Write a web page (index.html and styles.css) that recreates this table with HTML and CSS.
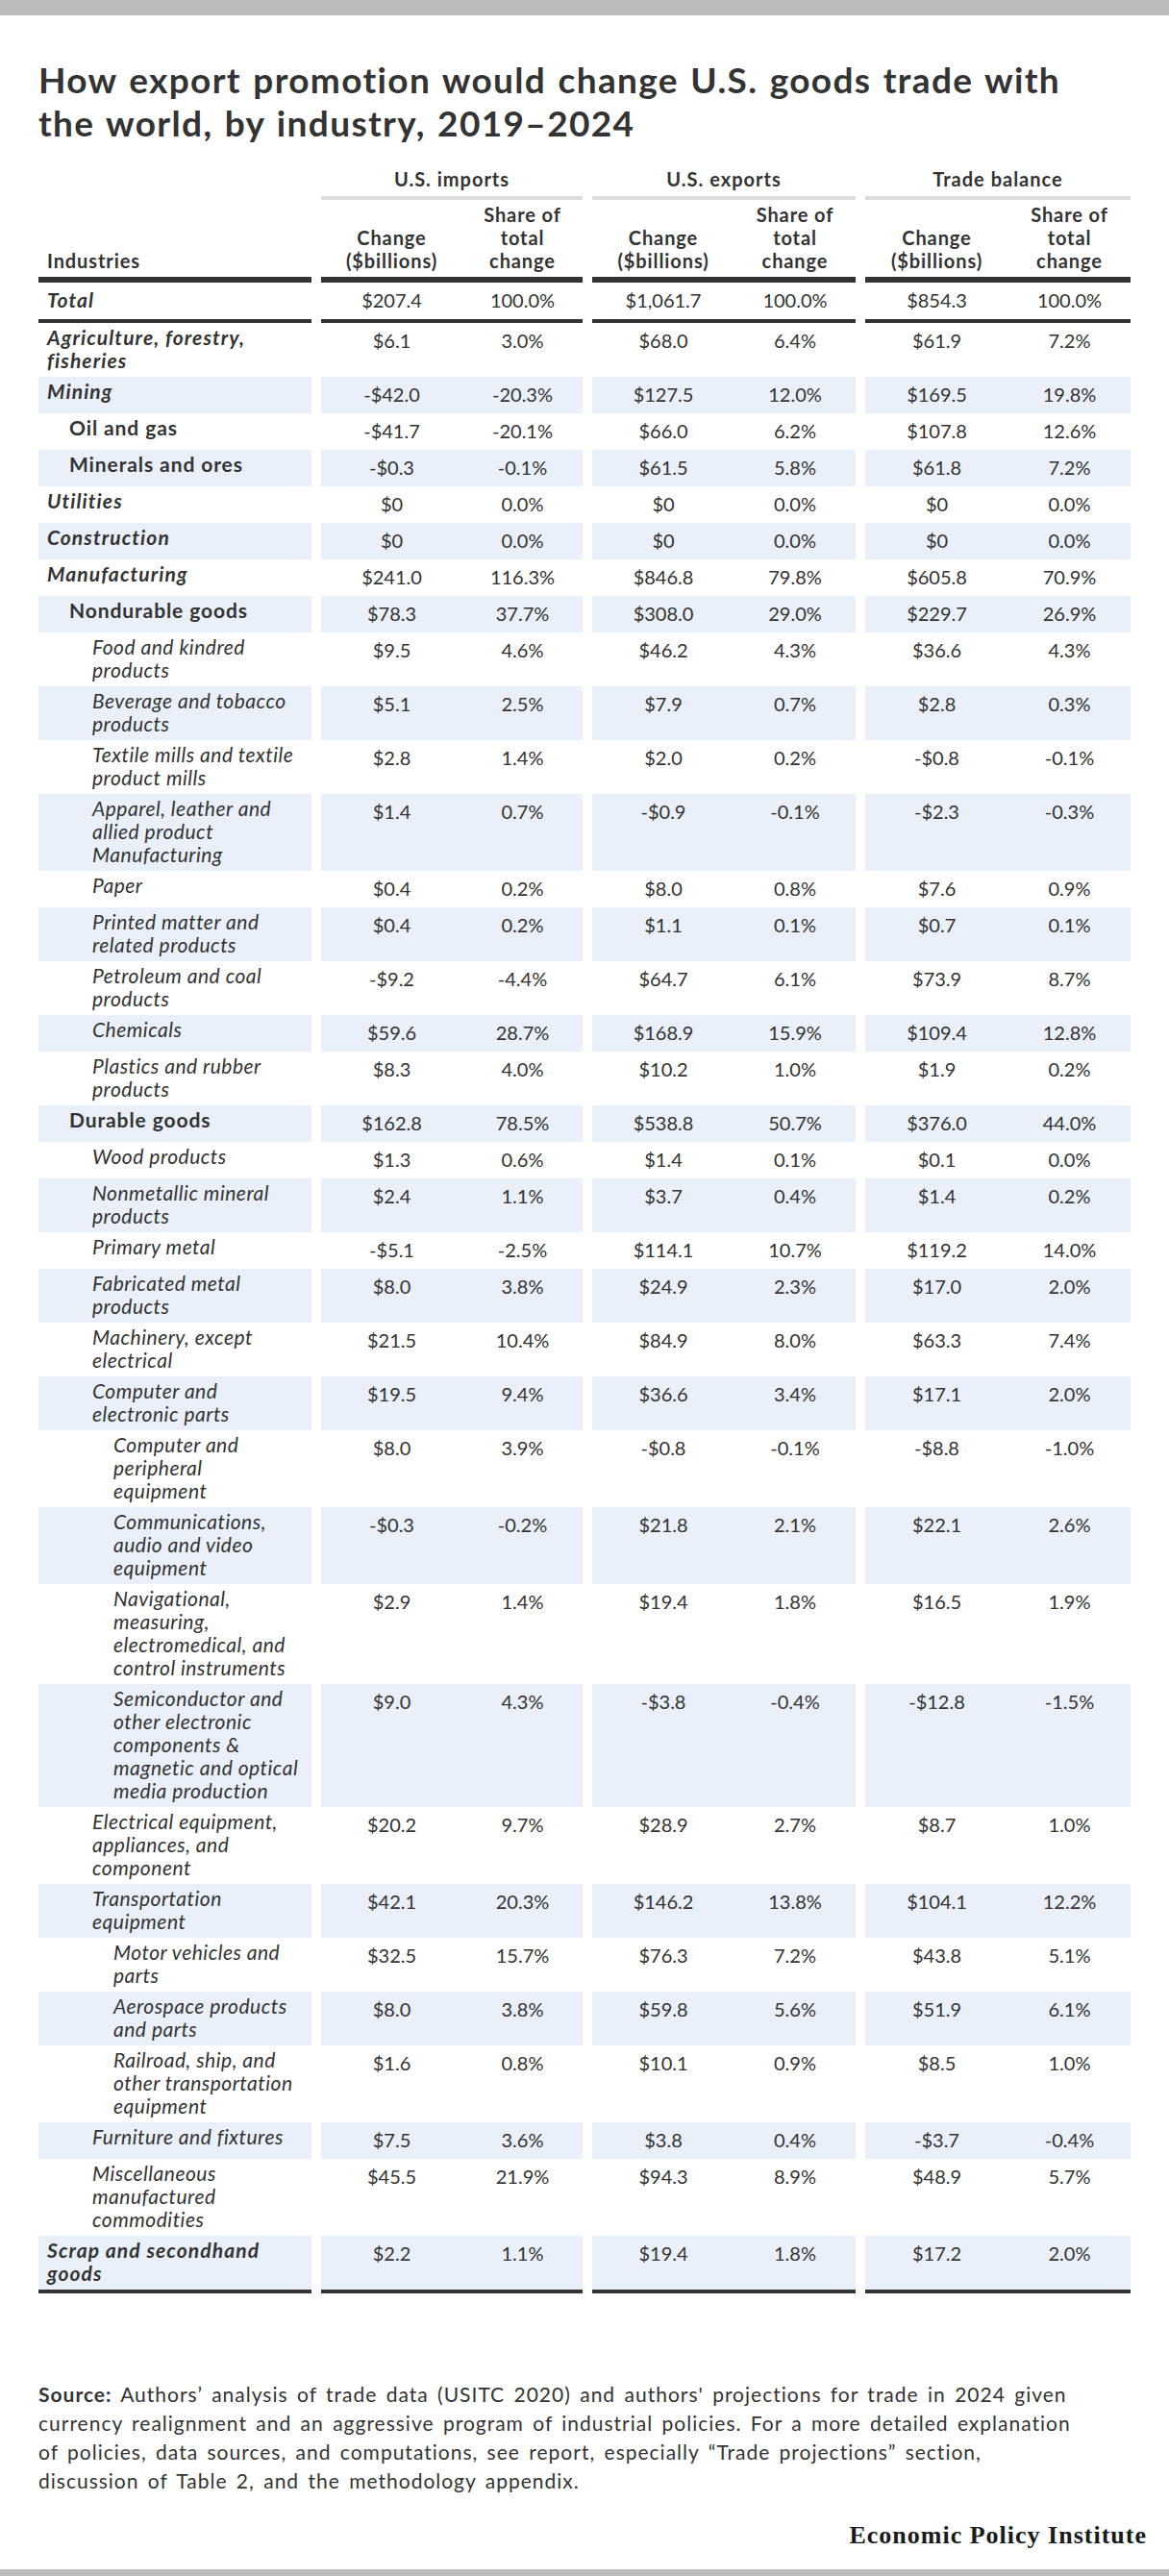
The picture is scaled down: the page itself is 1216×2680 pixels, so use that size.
FILE: index.html
```html
<!DOCTYPE html>
<html lang="en">
<head>
<meta charset="utf-8">
<title>How export promotion would change U.S. goods trade</title>
<link rel="stylesheet" href="styles.css">
</head>
<body>
<div class="topbar"></div>
<main class="wrap">
  <h1 class="title">How export promotion would change U.S. goods trade with<br>the world, by industry, 2019–2024</h1>

  <div class="table">
    <div class="row hd1">
      <div class="gh empty"></div>
      <div class="gh">U.S. imports</div>
      <div class="gh">U.S. exports</div>
      <div class="gh">Trade balance</div>
    </div>
    <div class="row hd2">
      <div class="c lab">Industries</div>
      <div class="c g"><span>Change<br>($billions)</span><span>Share of<br>total<br>change</span></div>
      <div class="c g"><span>Change<br>($billions)</span><span>Share of<br>total<br>change</span></div>
      <div class="c g"><span>Change<br>($billions)</span><span>Share of<br>total<br>change</span></div>
    </div>
    <div class="row total l0">
      <div class="c lab">Total</div>
      <div class="c g"><span>$207.4</span><span>100.0%</span></div>
      <div class="c g"><span>$1,061.7</span><span>100.0%</span></div>
      <div class="c g"><span>$854.3</span><span>100.0%</span></div>
    </div>

    <div class="tbody">
      <div class="row l0"><div class="c lab">Agriculture, forestry,<br>fisheries</div><div class="c g"><span>$6.1</span><span>3.0%</span></div><div class="c g"><span>$68.0</span><span>6.4%</span></div><div class="c g"><span>$61.9</span><span>7.2%</span></div></div>
      <div class="row l0"><div class="c lab">Mining</div><div class="c g"><span>-$42.0</span><span>-20.3%</span></div><div class="c g"><span>$127.5</span><span>12.0%</span></div><div class="c g"><span>$169.5</span><span>19.8%</span></div></div>
      <div class="row l1"><div class="c lab">Oil and gas</div><div class="c g"><span>-$41.7</span><span>-20.1%</span></div><div class="c g"><span>$66.0</span><span>6.2%</span></div><div class="c g"><span>$107.8</span><span>12.6%</span></div></div>
      <div class="row l1"><div class="c lab">Minerals and ores</div><div class="c g"><span>-$0.3</span><span>-0.1%</span></div><div class="c g"><span>$61.5</span><span>5.8%</span></div><div class="c g"><span>$61.8</span><span>7.2%</span></div></div>
      <div class="row l0"><div class="c lab">Utilities</div><div class="c g"><span>$0</span><span>0.0%</span></div><div class="c g"><span>$0</span><span>0.0%</span></div><div class="c g"><span>$0</span><span>0.0%</span></div></div>
      <div class="row l0"><div class="c lab">Construction</div><div class="c g"><span>$0</span><span>0.0%</span></div><div class="c g"><span>$0</span><span>0.0%</span></div><div class="c g"><span>$0</span><span>0.0%</span></div></div>
      <div class="row l0"><div class="c lab">Manufacturing</div><div class="c g"><span>$241.0</span><span>116.3%</span></div><div class="c g"><span>$846.8</span><span>79.8%</span></div><div class="c g"><span>$605.8</span><span>70.9%</span></div></div>
      <div class="row l1"><div class="c lab">Nondurable goods</div><div class="c g"><span>$78.3</span><span>37.7%</span></div><div class="c g"><span>$308.0</span><span>29.0%</span></div><div class="c g"><span>$229.7</span><span>26.9%</span></div></div>
      <div class="row l2"><div class="c lab">Food and kindred<br>products</div><div class="c g"><span>$9.5</span><span>4.6%</span></div><div class="c g"><span>$46.2</span><span>4.3%</span></div><div class="c g"><span>$36.6</span><span>4.3%</span></div></div>
      <div class="row l2"><div class="c lab">Beverage and tobacco<br>products</div><div class="c g"><span>$5.1</span><span>2.5%</span></div><div class="c g"><span>$7.9</span><span>0.7%</span></div><div class="c g"><span>$2.8</span><span>0.3%</span></div></div>
      <div class="row l2"><div class="c lab">Textile mills and textile<br>product mills</div><div class="c g"><span>$2.8</span><span>1.4%</span></div><div class="c g"><span>$2.0</span><span>0.2%</span></div><div class="c g"><span>-$0.8</span><span>-0.1%</span></div></div>
      <div class="row l2"><div class="c lab">Apparel, leather and<br>allied product<br>Manufacturing</div><div class="c g"><span>$1.4</span><span>0.7%</span></div><div class="c g"><span>-$0.9</span><span>-0.1%</span></div><div class="c g"><span>-$2.3</span><span>-0.3%</span></div></div>
      <div class="row l2"><div class="c lab">Paper</div><div class="c g"><span>$0.4</span><span>0.2%</span></div><div class="c g"><span>$8.0</span><span>0.8%</span></div><div class="c g"><span>$7.6</span><span>0.9%</span></div></div>
      <div class="row l2"><div class="c lab">Printed matter and<br>related products</div><div class="c g"><span>$0.4</span><span>0.2%</span></div><div class="c g"><span>$1.1</span><span>0.1%</span></div><div class="c g"><span>$0.7</span><span>0.1%</span></div></div>
      <div class="row l2"><div class="c lab">Petroleum and coal<br>products</div><div class="c g"><span>-$9.2</span><span>-4.4%</span></div><div class="c g"><span>$64.7</span><span>6.1%</span></div><div class="c g"><span>$73.9</span><span>8.7%</span></div></div>
      <div class="row l2"><div class="c lab">Chemicals</div><div class="c g"><span>$59.6</span><span>28.7%</span></div><div class="c g"><span>$168.9</span><span>15.9%</span></div><div class="c g"><span>$109.4</span><span>12.8%</span></div></div>
      <div class="row l2"><div class="c lab">Plastics and rubber<br>products</div><div class="c g"><span>$8.3</span><span>4.0%</span></div><div class="c g"><span>$10.2</span><span>1.0%</span></div><div class="c g"><span>$1.9</span><span>0.2%</span></div></div>
      <div class="row l1"><div class="c lab">Durable goods</div><div class="c g"><span>$162.8</span><span>78.5%</span></div><div class="c g"><span>$538.8</span><span>50.7%</span></div><div class="c g"><span>$376.0</span><span>44.0%</span></div></div>
      <div class="row l2"><div class="c lab">Wood products</div><div class="c g"><span>$1.3</span><span>0.6%</span></div><div class="c g"><span>$1.4</span><span>0.1%</span></div><div class="c g"><span>$0.1</span><span>0.0%</span></div></div>
      <div class="row l2"><div class="c lab">Nonmetallic mineral<br>products</div><div class="c g"><span>$2.4</span><span>1.1%</span></div><div class="c g"><span>$3.7</span><span>0.4%</span></div><div class="c g"><span>$1.4</span><span>0.2%</span></div></div>
      <div class="row l2"><div class="c lab">Primary metal</div><div class="c g"><span>-$5.1</span><span>-2.5%</span></div><div class="c g"><span>$114.1</span><span>10.7%</span></div><div class="c g"><span>$119.2</span><span>14.0%</span></div></div>
      <div class="row l2"><div class="c lab">Fabricated metal<br>products</div><div class="c g"><span>$8.0</span><span>3.8%</span></div><div class="c g"><span>$24.9</span><span>2.3%</span></div><div class="c g"><span>$17.0</span><span>2.0%</span></div></div>
      <div class="row l2"><div class="c lab">Machinery, except<br>electrical</div><div class="c g"><span>$21.5</span><span>10.4%</span></div><div class="c g"><span>$84.9</span><span>8.0%</span></div><div class="c g"><span>$63.3</span><span>7.4%</span></div></div>
      <div class="row l2"><div class="c lab">Computer and<br>electronic parts</div><div class="c g"><span>$19.5</span><span>9.4%</span></div><div class="c g"><span>$36.6</span><span>3.4%</span></div><div class="c g"><span>$17.1</span><span>2.0%</span></div></div>
      <div class="row l3"><div class="c lab">Computer and<br>peripheral<br>equipment</div><div class="c g"><span>$8.0</span><span>3.9%</span></div><div class="c g"><span>-$0.8</span><span>-0.1%</span></div><div class="c g"><span>-$8.8</span><span>-1.0%</span></div></div>
      <div class="row l3"><div class="c lab">Communications,<br>audio and video<br>equipment</div><div class="c g"><span>-$0.3</span><span>-0.2%</span></div><div class="c g"><span>$21.8</span><span>2.1%</span></div><div class="c g"><span>$22.1</span><span>2.6%</span></div></div>
      <div class="row l3"><div class="c lab">Navigational,<br>measuring,<br>electromedical, and<br>control instruments</div><div class="c g"><span>$2.9</span><span>1.4%</span></div><div class="c g"><span>$19.4</span><span>1.8%</span></div><div class="c g"><span>$16.5</span><span>1.9%</span></div></div>
      <div class="row l3"><div class="c lab">Semiconductor and<br>other electronic<br>components &amp;<br>magnetic and optical<br>media production</div><div class="c g"><span>$9.0</span><span>4.3%</span></div><div class="c g"><span>-$3.8</span><span>-0.4%</span></div><div class="c g"><span>-$12.8</span><span>-1.5%</span></div></div>
      <div class="row l2"><div class="c lab">Electrical equipment,<br>appliances, and<br>component</div><div class="c g"><span>$20.2</span><span>9.7%</span></div><div class="c g"><span>$28.9</span><span>2.7%</span></div><div class="c g"><span>$8.7</span><span>1.0%</span></div></div>
      <div class="row l2"><div class="c lab">Transportation<br>equipment</div><div class="c g"><span>$42.1</span><span>20.3%</span></div><div class="c g"><span>$146.2</span><span>13.8%</span></div><div class="c g"><span>$104.1</span><span>12.2%</span></div></div>
      <div class="row l3"><div class="c lab">Motor vehicles and<br>parts</div><div class="c g"><span>$32.5</span><span>15.7%</span></div><div class="c g"><span>$76.3</span><span>7.2%</span></div><div class="c g"><span>$43.8</span><span>5.1%</span></div></div>
      <div class="row l3"><div class="c lab">Aerospace products<br>and parts</div><div class="c g"><span>$8.0</span><span>3.8%</span></div><div class="c g"><span>$59.8</span><span>5.6%</span></div><div class="c g"><span>$51.9</span><span>6.1%</span></div></div>
      <div class="row l3"><div class="c lab">Railroad, ship, and<br>other transportation<br>equipment</div><div class="c g"><span>$1.6</span><span>0.8%</span></div><div class="c g"><span>$10.1</span><span>0.9%</span></div><div class="c g"><span>$8.5</span><span>1.0%</span></div></div>
      <div class="row l2"><div class="c lab">Furniture and fixtures</div><div class="c g"><span>$7.5</span><span>3.6%</span></div><div class="c g"><span>$3.8</span><span>0.4%</span></div><div class="c g"><span>-$3.7</span><span>-0.4%</span></div></div>
      <div class="row l2"><div class="c lab">Miscellaneous<br>manufactured<br>commodities</div><div class="c g"><span>$45.5</span><span>21.9%</span></div><div class="c g"><span>$94.3</span><span>8.9%</span></div><div class="c g"><span>$48.9</span><span>5.7%</span></div></div>
      <div class="row l0 last"><div class="c lab">Scrap and secondhand<br>goods</div><div class="c g"><span>$2.2</span><span>1.1%</span></div><div class="c g"><span>$19.4</span><span>1.8%</span></div><div class="c g"><span>$17.2</span><span>2.0%</span></div></div>
    </div>
  </div>

  <p class="source"><strong>Source:</strong> Authors’ analysis of trade data (USITC 2020) and authors' projections for trade in 2024 given<br>currency realignment and an aggressive program of industrial policies. For a more detailed explanation<br>of policies, data sources, and computations, see report, especially “Trade projections” section,<br>discussion of Table 2, and the methodology appendix.</p>

  <div class="logo">Economic Policy Institute</div>
</main>
<div class="bottombar"></div>
</body>
</html>
```

FILE: styles.css
```css
html, body {
  margin: 0;
  padding: 0;
  background: #ffffff;
}

body {
  width: 1216px;
  height: 2680px;
  display: flex;
  flex-direction: column;
  font-family: "Lato", "Noto Sans", sans-serif;
  color: #333333;
}

.topbar {
  height: 16px;
  background: #bbbbbb;
  flex: none;
}

.bottombar {
  height: 7px;
  background: #bbbbbb;
  margin-top: auto;
  flex: none;
}

.wrap {
  padding: 0 40px;
}

.title {
  margin: 44px 0 0;
  font-size: 37px;
  line-height: 45px;
  font-weight: 700;
  letter-spacing: 1.35px;
  word-spacing: 2px;
  white-space: nowrap;
  color: #333333;
}

.table {
  margin-top: 24px;
  width: 1136px;
}

.row {
  display: grid;
  grid-template-columns: 284px 272px 274px 276px;
  column-gap: 10px;
}

/* group header */
.hd1 .gh {
  font-size: 20px;
  line-height: 24px;
  font-weight: 700;
  letter-spacing: 1px;
  text-align: center;
  padding-bottom: 6px;
  border-bottom: 4px solid #dcdcdc;
}

.hd1 .gh.empty {
  border-bottom-color: transparent;
}

.hd2 .c {
  font-weight: 700;
  font-size: 20px;
  line-height: 24px;
  letter-spacing: 0.9px;
  padding: 3px 0 5px;
  border-bottom: 6px solid #333333;
}

.hd2 .g {
  align-items: end;
}

.hd2 .lab {
  display: flex;
  align-items: flex-end;
  padding-left: 9px;
  font-size: 20px;
}

.g {
  display: grid;
  grid-template-columns: 1fr 1fr;
  align-items: start;
  font-size: 20px;
}

.g span {
  display: block;
  text-align: center;
  padding-left: 11px;
  line-height: 24px;
}

.tbody .g span,
.total .g span {
  padding-top: 6px;
  padding-bottom: 8px;
}

.lab {
  font-size: 21px;
  line-height: 24px;
  letter-spacing: 1.1px;
  white-space: nowrap;
  padding: 3px 8px 5px 9px;
}

.total .c {
  border-bottom: 4px solid #333333;
}

.total .lab {
  padding-top: 6px;
  padding-bottom: 8px;
}

.tbody .row:nth-child(even) .c {
  background: #e9f0f9;
}

.row.last .c {
  border-bottom: 4px solid #333333;
}

.l0 .lab {
  font-weight: 700;
  font-style: italic;
}

.l1 .lab {
  font-weight: 700;
  letter-spacing: 0.9px;
  padding-left: 32px;
}

.l2 .lab {
  font-style: italic;
  letter-spacing: 0.5px;
  padding-left: 56px;
}

.l3 .lab {
  font-style: italic;
  letter-spacing: 0.5px;
  padding-left: 78px;
}

.source {
  margin: 90px 0 0;
  font-size: 21px;
  line-height: 30px;
  letter-spacing: 1px;
  word-spacing: 3px;
  white-space: nowrap;
  color: #333333;
}

.source strong {
  font-weight: 700;
}

.logo {
  margin-top: 27px;
  margin-right: -17px;
  text-align: right;
  font-family: "Liberation Serif", "Times New Roman", serif;
  font-weight: 700;
  font-size: 26px;
  line-height: 30px;
  letter-spacing: 1px;
  color: #1a1a1a;
}
```
